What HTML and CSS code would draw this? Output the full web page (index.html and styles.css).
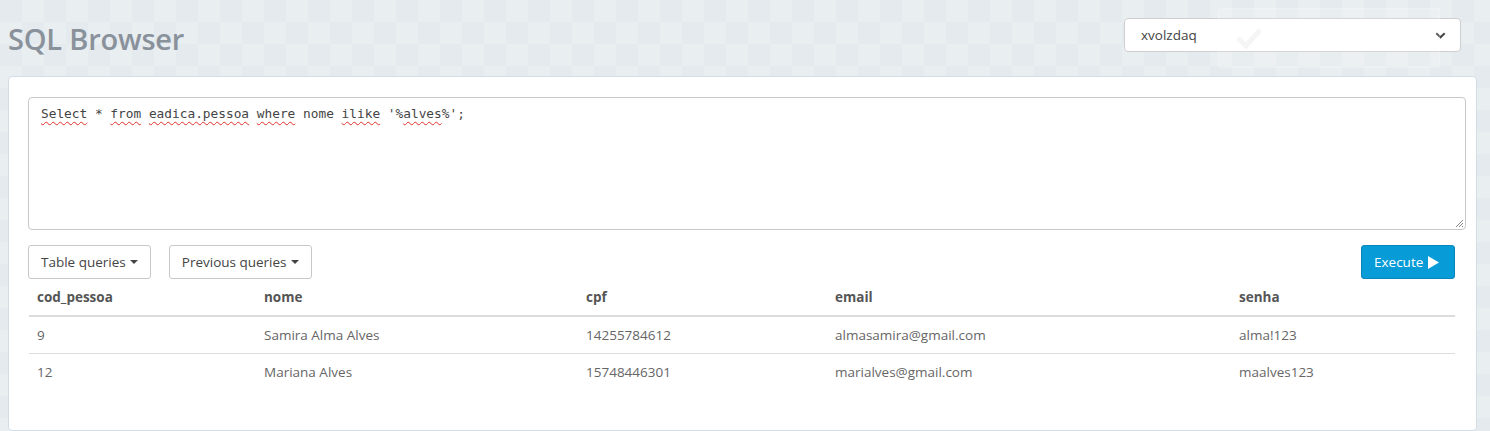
FILE: index.html
```html
<!DOCTYPE html>
<html lang="pt">
<head>
<meta charset="utf-8">
<title>SQL Browser</title>
<link rel="stylesheet" href="styles.css">
</head>
<body>
<header class="topbar">
  <h1 class="title">SQL Browser</h1>
  <div class="db-select">
    <span class="db-name">xvolzdaq</span>
    <svg class="chevron" width="11" height="7" viewBox="0 0 11 7"><path d="M1.3 1.3 L5.5 5.3 L9.7 1.3" fill="none" stroke="#444" stroke-width="2"/></svg>
  </div>
  <div class="toast">
    <svg class="toast-check" width="28" height="22" viewBox="0 0 28 22"><path d="M3 11 L11 19 L25 3" fill="none" stroke="currentColor" stroke-width="5"/></svg>
    <span>Query completed</span>
  </div>
</header>

<main class="card">
  <div class="editor">
    <div class="code"><span class="sp">Select</span> * <span class="sp">from</span> <span class="sp">eadica.pessoa</span> <span class="sp">where</span> nome <span class="sp">ilike</span> '%<span class="sp">alves</span>%';</div>
    <svg class="grip" width="10" height="10" viewBox="0 0 10 10"><path d="M9 2 L2 9 M9 5 L5 9 M9 8 L8 9" stroke="#888" stroke-width="1"/></svg>
  </div>

  <div class="toolbar">
    <div class="toolbar-left">
      <button class="btn">Table queries <span class="caret"></span></button>
      <button class="btn">Previous queries <span class="caret"></span></button>
    </div>
    <button class="btn btn-primary">Execute <svg class="play" width="11" height="13" viewBox="0 0 11 13"><path d="M0 0 L11 6.5 L0 13 Z" fill="#fff"/></svg></button>
  </div>

  <table class="results">
    <thead>
      <tr>
        <th class="c1">cod_pessoa</th>
        <th class="c2">nome</th>
        <th class="c3">cpf</th>
        <th class="c4">email</th>
        <th class="c5">senha</th>
      </tr>
    </thead>
    <tbody>
      <tr>
        <td>9</td>
        <td>Samira Alma Alves</td>
        <td>14255784612</td>
        <td>almasamira@gmail.com</td>
        <td>alma!123</td>
      </tr>
      <tr>
        <td>12</td>
        <td>Mariana Alves</td>
        <td>15748446301</td>
        <td>marialves@gmail.com</td>
        <td>maalves123</td>
      </tr>
    </tbody>
  </table>
</main>
</body>
</html>
```

FILE: styles.css
```css
* { box-sizing: border-box; }

html, body { height: 100%; }

body {
  margin: 0;
  font-family: "Open Sans", "Noto Sans", sans-serif;
  font-size: 13.5px;
  color: #555;
  background-color: #e4eaee;
  background-image:
    repeating-conic-gradient(rgba(255,255,255,0.18) 0 25%, rgba(255,255,255,0) 0 50%);
  background-size: 44px 44px;
  overflow: hidden;
}

.topbar {
  position: relative;
  height: 76px;
  display: flex;
  justify-content: space-between;
  align-items: flex-start;
  padding: 0 29px 0 8px;
}

.title {
  margin: 19px 0 0 0;
  font-size: 29px;
  line-height: 40px;
  font-weight: 600;
  color: #89919b;
  letter-spacing: -0.2px;
}

.db-select {
  margin-top: 18px;
  width: 337px;
  height: 34px;
  background: #fff;
  border: 1px solid #cfcfcf;
  border-radius: 4px;
  display: flex;
  align-items: center;
  justify-content: space-between;
  padding: 0 14px 0 16px;
  font-size: 13.5px;
  color: #444;
}

.toast {
  position: absolute;
  left: 1218px;
  top: 8px;
  width: 222px;
  height: 60px;
  background: rgba(255,255,255,0.15);
  border: 1px solid rgba(255,255,255,0.2);
  border-radius: 3px;
  display: flex;
  align-items: center;
  gap: 36px;
  padding-left: 16px;
  color: rgba(0,0,0,0.025);
  font-size: 14px;
  pointer-events: none;
}

.toast-check { color: rgba(0,0,0,0.04); }

.card {
  margin: 0 13px 0 8px;
  height: 355px;
  background: #fff;
  border: 1px solid #d3dde6;
  border-radius: 4px;
  padding: 20px 21px 0 19px;
}

.editor {
  position: relative;
  height: 133px;
  margin-right: -11px;
  border: 1px solid #c8c8c8;
  border-radius: 4px;
  padding: 6px 12px;
}

.code {
  font-family: "DejaVu Sans Mono", "Liberation Mono", monospace;
  font-size: 12.8px;
  line-height: 20px;
  color: #444;
  white-space: pre;
}

.sp {
  text-decoration: underline wavy #e0302a;
  text-decoration-thickness: 1px;
  text-underline-offset: 3px;
}

.grip {
  position: absolute;
  right: 1px;
  bottom: 1px;
}

.toolbar {
  margin-top: 15px;
  display: flex;
  justify-content: space-between;
  align-items: center;
}

.toolbar-left {
  display: flex;
  gap: 18px;
}

.btn {
  height: 34px;
  padding: 0 12px;
  background: #fff;
  border: 1px solid #c8c8c8;
  border-radius: 3px;
  font-family: inherit;
  font-size: 13.5px;
  color: #444;
  display: inline-flex;
  align-items: center;
  gap: 4px;
}

.caret {
  width: 0;
  height: 0;
  border-left: 4px solid transparent;
  border-right: 4px solid transparent;
  border-top: 4px solid #444;
}

.btn-primary {
  background: #079bd7;
  border-color: #0686bb;
  color: #fff;
  padding: 0 12px 0 12px;
  gap: 5px;
  width: 94px;
}

.results {
  border-collapse: collapse;
  margin-left: 1px;
  width: calc(100% - 1px);
  table-layout: fixed;
}

.results th, .results td {
  text-align: left;
  padding: 8px 8px;
  line-height: 20px;
  font-size: 13.5px;
}

.results th {
  font-weight: 700;
  color: #555;
  border-bottom: 2px solid #dddddd;
}

.results td {
  color: #666;
  border-bottom: 1px solid #dddddd;
}

.results tbody tr:last-child td { border-bottom: none; }

.c1 { width: 227px; }
.c2 { width: 322px; }
.c3 { width: 249px; }
.c4 { width: 404px; }
```
